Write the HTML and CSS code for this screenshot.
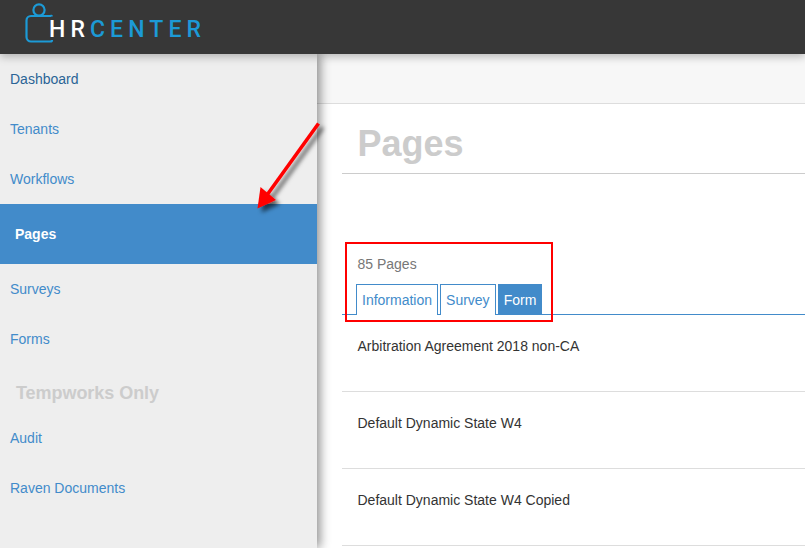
FILE: index.html
```html
<!DOCTYPE html>
<html lang="en">
<head>
<meta charset="utf-8">
<title>Pages</title>
<link rel="stylesheet" href="styles.css">
</head>
<body>
<header class="topbar">
  <svg class="logo-icon" width="30" height="44" viewBox="0 0 30 44" aria-hidden="true">
    <circle cx="14" cy="10" r="5.6" fill="none" stroke="#1c9ad6" stroke-width="2.2"/>
    <path d="M27 16.5a1 1 0 0 0-1.500-.5H6a4.500 4.500 0 0 0-4.500 4.500V37a4.500 4.500 0 0 0 4.500 4.500h19.500a1.500 1.500 0 0 0 1.500-1.500" fill="none" stroke="#1c9ad6" stroke-width="2.2"/>
  </svg>
  <div class="logo-text"><span class="logo-white">HR</span><span class="logo-blue">CENTER</span></div>
</header>
<div class="layout">
  <nav class="sidebar">
    <a class="nav-item nav-dark">Dashboard</a>
    <a class="nav-item">Tenants</a>
    <a class="nav-item">Workflows</a>
    <a class="nav-item nav-active">Pages</a>
    <a class="nav-item">Surveys</a>
    <a class="nav-item">Forms</a>
    <div class="nav-heading">Tempworks Only</div>
    <a class="nav-item">Audit</a>
    <a class="nav-item">Raven Documents</a>
  </nav>
  <main class="main">
    <div class="band"></div>
    <div class="content">
      <h1 class="title">Pages</h1>
      <div class="count">85 Pages</div>
      <div class="tabs">
        <span class="tab">Information</span>
        <span class="tab">Survey</span>
        <span class="tab tab-active">Form</span>
      </div>
      <div class="row">Arbitration Agreement 2018 non-CA</div>
      <div class="row">Default Dynamic State W4</div>
      <div class="row">Default Dynamic State W4 Copied</div>
    </div>
  </main>
</div>
<div class="callout-box"></div>
<svg class="callout-arrow" width="90" height="110" viewBox="0 0 90 110" aria-hidden="true">
  <defs>
    <filter id="arrow-shadow" x="-30%" y="-30%" width="160%" height="160%">
      <feDropShadow dx="4" dy="4" stdDeviation="2" flood-color="#000" flood-opacity="0.6"/>
    </filter>
  </defs>
  <g filter="url(#arrow-shadow)">
    <path d="M74.500 7.500 23 79" stroke="#f00" stroke-width="3.600" fill="none"/>
    <path d="M13.500 92.500 16.500 71 32 84Z" fill="#f00"/>
  </g>
</svg>
</body>
</html>
```
FILE: styles.css
```css
* { box-sizing: border-box; }
html, body { margin: 0; height: 100%; overflow: hidden; }
body { font-family: "Liberation Sans", Arial, sans-serif; font-size: 14px; background: #fff; position: relative; }

.topbar {
  height: 54px;
  background: #373737;
  display: flex;
  align-items: flex-start;
  padding-left: 25px;
  position: relative;
  z-index: 3;
  box-shadow: 0 3px 8px rgba(0,0,0,.25);
}
.logo-icon { flex: none; }
.logo-text {
  font-family: Roboto, sans-serif;
  font-size: 23px;
  font-weight: 500;
  line-height: 24px;
  letter-spacing: 5.1px;
  margin: 18px 0 0 -6px;
}
.logo-white { color: #fff; }
.logo-blue { color: #1c9ad6; }

.layout { display: flex; height: 494px; }

.sidebar {
  width: 317px;
  flex: none;
  background: #eee;
  box-shadow: 3px 0 10px rgba(0,0,0,.45);
  position: relative;
  z-index: 2;
}
.nav-item {
  display: flex;
  align-items: center;
  height: 50px;
  padding-left: 10px;
  color: #428bca;
}
.nav-dark { color: #2a6496; }
.nav-active {
  height: 60px;
  padding-left: 15px;
  background: #428bca;
  color: #fff;
  font-weight: bold;
}
.nav-heading {
  height: 49px;
  padding: 19px 0 0 16px;
  font-size: 18px;
  line-height: 21px;
  font-weight: bold;
  color: #ccc;
  letter-spacing: -0.05px;
}

.main { flex: 1; min-width: 0; }
.band { height: 50px; background: #f7f7f7; border-bottom: 1px solid #ddd; }
.content { padding-left: 25px; }
.title {
  margin: 0;
  height: 70px;
  padding: 20px 0 0 15.5px;
  font-size: 36px;
  line-height: 40px;
  font-weight: bold;
  color: #ccc;
  border-bottom: 1px solid #ccc;
}
.count {
  margin-top: 82px;
  padding-left: 15.5px;
  line-height: 17px;
  color: #777;
}
.tabs {
  display: flex;
  gap: 2px;
  height: 31px;
  margin-top: 11px;
  padding-left: 14px;
  border-bottom: 1px solid #428bca;
}
.tab {
  height: 31px;
  padding: 0 5px;
  line-height: 30px;
  color: #428bca;
  background: #fff;
  border: 1px solid #428bca;
  border-bottom: 0;
}
.tab-active { background: #428bca; color: #fff; }
.row {
  height: 77px;
  padding: 23px 0 0 15.5px;
  line-height: 17px;
  color: #333;
  border-bottom: 1px solid #ddd;
}

.callout-box {
  position: absolute;
  left: 345px;
  top: 242px;
  width: 208px;
  height: 80px;
  border: 2px solid #f00;
  z-index: 4;
}
.callout-arrow {
  position: absolute;
  left: 244px;
  top: 116px;
  z-index: 4;
}
```
